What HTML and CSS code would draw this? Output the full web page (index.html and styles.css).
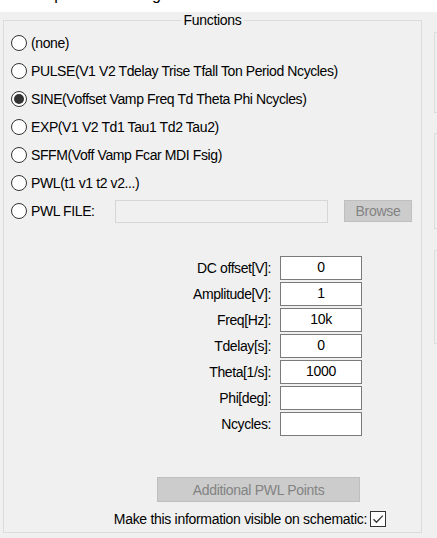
FILE: index.html
```html
<!DOCTYPE html>
<html>
<head>
<meta charset="utf-8">
<link rel="stylesheet" href="styles.css">
</head>
<body>
<div class="titlebar"><div class="title-text">Independent Voltage Source - V1</div></div>
<div class="main">
  <fieldset class="group">
    <legend class="legend">Functions</legend>
    <div class="radios">
      <div class="radio-row"><span class="radio"></span><span class="rlabel">(none)</span></div>
      <div class="radio-row"><span class="radio"></span><span class="rlabel">PULSE(V1 V2 Tdelay Trise Tfall Ton Period Ncycles)</span></div>
      <div class="radio-row"><span class="radio checked"></span><span class="rlabel">SINE(Voffset Vamp Freq Td Theta Phi Ncycles)</span></div>
      <div class="radio-row"><span class="radio"></span><span class="rlabel">EXP(V1 V2 Td1 Tau1 Td2 Tau2)</span></div>
      <div class="radio-row"><span class="radio"></span><span class="rlabel">SFFM(Voff Vamp Fcar MDI Fsig)</span></div>
      <div class="radio-row"><span class="radio"></span><span class="rlabel">PWL(t1 v1 t2 v2...)</span></div>
      <div class="radio-row"><span class="radio"></span><span class="rlabel file-label">PWL FILE:</span><span class="file-input"></span><span class="btn browse">Browse</span></div>
    </div>
    <div class="fields">
      <span class="flabel">DC offset[V]:</span><span class="finput">0</span>
      <span class="flabel">Amplitude[V]:</span><span class="finput">1</span>
      <span class="flabel">Freq[Hz]:</span><span class="finput">10k</span>
      <span class="flabel">Tdelay[s]:</span><span class="finput">0</span>
      <span class="flabel">Theta[1/s]:</span><span class="finput">1000</span>
      <span class="flabel">Phi[deg]:</span><span class="finput"></span>
      <span class="flabel">Ncycles:</span><span class="finput"></span>
    </div>
    <div class="btn addpwl">Additional PWL Points</div>
    <div class="visible-row">
      <span class="vlabel">Make this information visible on schematic:</span>
      <span class="checkbox"><svg width="12" height="10" viewBox="0 0 12 10"><path d="M1.5 5.2 L4.5 8.2 L10.8 1.6" fill="none" stroke="#333" stroke-width="1.3"/></svg></span>
    </div>
  </fieldset>
  <div class="side">
    <div class="panel p1"></div>
    <div class="panel p2"></div>
    <div class="panel p3"></div>
  </div>
</div>
</body>
</html>
```
FILE: styles.css
```css
html, body {
  margin: 0;
  padding: 0;
  background: #f0f0f0;
  overflow: hidden;
  width: 437px;
  height: 538px;
  font-family: "Liberation Sans", Arial, sans-serif;
  color: #000;
}
.titlebar {
  height: 12px;
  background: #fff;
  overflow: hidden;
}
.title-text {
  font-size: 16px;
  line-height: 16px;
  margin-top: -13px;
  margin-left: 23px;
  white-space: nowrap;
}
.main {
  display: flex;
  align-items: flex-start;
  width: 600px;
}
.group {
  margin: 0 0 0 3px;
  padding: 0 0 5px 0;
  width: 417px;
  border: 1px solid #dcdcdc;
  box-sizing: content-box;
  min-width: 0;
}
.legend {
  margin: 0 auto;
  padding: 0 2px;
  font-size: 14px;
  line-height: 16px;
  letter-spacing: -0.3px;
}
.radios {
  padding-top: 1px;
}
.radio-row {
  height: 28px;
  display: flex;
  align-items: center;
  padding-left: 7px;
  font-size: 14px;
}
.radio {
  width: 14px;
  height: 14px;
  border: 1px solid #333;
  border-radius: 50%;
  background: #fff;
  position: relative;
  flex: none;
  margin-right: 4px;
}
.radio.checked::after {
  content: "";
  position: absolute;
  left: 2px;
  top: 2px;
  width: 10px;
  height: 10px;
  border-radius: 50%;
  background: #333;
}
.rlabel {
  letter-spacing: -0.4px;
  white-space: nowrap;
}
.file-label {
  width: 84px;
  flex: none;
}
.file-input {
  width: 211px;
  height: 21px;
  border: 1px solid #d6d6d6;
  background: #f0f0f0;
  flex: none;
}
.btn {
  background: #cccccc;
  border: 1px solid #bfbfbf;
  color: #838383;
  font-size: 14px;
  letter-spacing: -0.3px;
  display: flex;
  align-items: center;
  justify-content: center;
  box-sizing: border-box;
}
.browse {
  width: 68px;
  height: 22px;
  margin-left: 16px;
  flex: none;
}
.fields {
  display: grid;
  grid-template-columns: 267px 82px;
  column-gap: 9px;
  row-gap: 2px;
  margin-top: 31px;
  font-size: 14px;
}
.flabel {
  text-align: right;
  height: 24px;
  line-height: 24px;
  letter-spacing: -0.4px;
  white-space: nowrap;
}
.finput {
  height: 24px;
  box-sizing: border-box;
  border: 1px solid #7a7a7a;
  background: #fff;
  text-align: center;
  line-height: 21px;
  letter-spacing: -0.3px;
}
.addpwl {
  width: 203px;
  height: 25px;
  margin-top: 41px;
  margin-left: 153px;
}
.visible-row {
  display: flex;
  align-items: center;
  justify-content: flex-end;
  padding-right: 35px;
  margin-top: 8px;
  height: 17px;
  font-size: 14px;
}
.vlabel {
  letter-spacing: -0.3px;
  white-space: nowrap;
  margin-right: 3px;
}
.checkbox {
  width: 16px;
  height: 16px;
  box-sizing: border-box;
  border: 1px solid #333;
  background: #fff;
  display: flex;
  align-items: center;
  justify-content: center;
  flex: none;
}
.side {
  margin-left: 12px;
  display: flex;
  flex-direction: column;
  padding-top: 20px;
  width: 120px;
}
.panel {
  border: 1px solid #dcdcdc;
  box-sizing: border-box;
  width: 120px;
}
.p1 { height: 81px; }
.p2 { height: 96px; margin-top: 20px; }
.p3 { height: 94px; margin-top: 21px; }
```
